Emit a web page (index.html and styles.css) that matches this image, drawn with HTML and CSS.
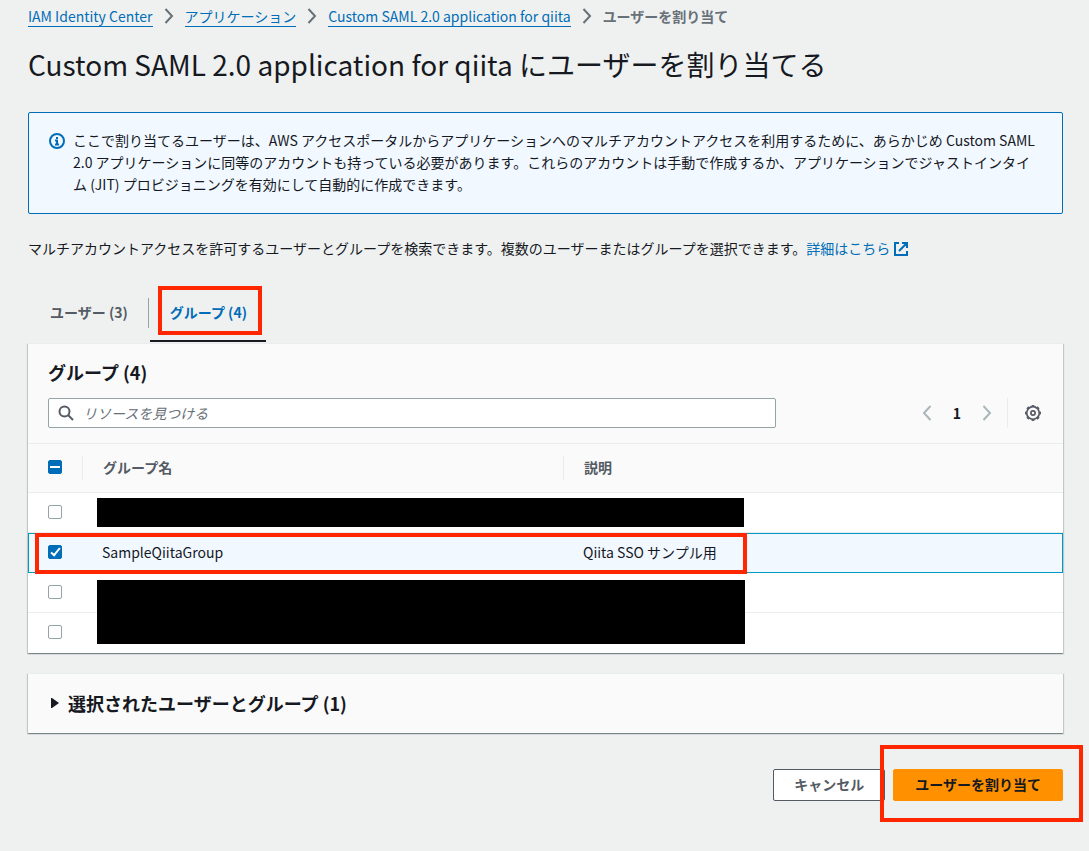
FILE: index.html
```html
<!DOCTYPE html>
<html lang="ja">
<head>
  <meta charset="UTF-8" />
  <meta name="viewport" content="width=device-width, initial-scale=1.0" />
  <title>ユーザーを割り当て</title>
  <link rel="stylesheet" href="styles.css">
</head>
<body>
  <nav class="breadcrumb">
    <a href="#">IAM Identity Center</a>
    <svg class="sep" viewBox="0 0 10 16"><path d="M1.500 1L8 8l-6.500 7"/></svg>
    <a href="#">アプリケーション</a>
    <svg class="sep" viewBox="0 0 10 16"><path d="M1.500 1L8 8l-6.500 7"/></svg>
    <a href="#">Custom SAML 2.0 application for qiita</a>
    <svg class="sep" viewBox="0 0 10 16"><path d="M1.500 1L8 8l-6.500 7"/></svg>
    <span class="current">ユーザーを割り当て</span>
  </nav>

  <main>
    <h1>Custom SAML 2.0 application for qiita にユーザーを割り当てる</h1>

    <div class="alert">
      <svg class="info-icon" viewBox="0 0 16 16">
        <circle cx="8" cy="8" r="7"/>
        <path d="M8 4v2M6 7.500h2V11M6 11.500h4"/>
      </svg>
      <p>ここで割り当てるユーザーは、AWS アクセスポータルからアプリケーションへのマルチアカウントアクセスを利用するために、あらかじめ Custom SAML 2.0 アプリケーションに同等のアカウントも持っている必要があります。これらのアカウントは手動で作成するか、アプリケーションでジャストインタイム (JIT) プロビジョニングを有効にして自動的に作成できます。</p>
    </div>

    <p class="lead">マルチアカウントアクセスを許可するユーザーとグループを検索できます。複数のユーザーまたはグループを選択できます。<a href="#">詳細はこちら <svg class="ext-icon" viewBox="0 0 16 16"><path d="M6 2H2v12h12v-4M9 2h5v5M14 2L6 10"/></svg></a></p>

    <!-- タブ -->
    <div class="tabs" role="tablist">
      <button class="tab" role="tab">ユーザー (3)</button>
      <button class="tab active" role="tab" aria-selected="true">グループ (4)<span class="mark mark-tab"></span></button>
    </div>

    <!-- グループ一覧 -->
    <section class="card">
      <div class="card-header">
        <h2>グループ (4)</h2>
        <div class="toolbar">
          <div class="search">
            <svg class="search-icon" viewBox="0 0 16 16"><circle cx="6.500" cy="6.500" r="5"/><path d="M10 10l5 5"/></svg>
            <input type="text" placeholder="リソースを見つける" aria-label="リソースを見つける">
          </div>
          <div class="pager">
            <button aria-label="前へ"><svg class="arrow" viewBox="0 0 10 16"><path d="M8.500 1L2 8l6.500 7"/></svg></button>
            <button class="page">1</button>
            <button aria-label="次へ"><svg class="arrow" viewBox="0 0 10 16"><path d="M1.500 1L8 8l-6.500 7"/></svg></button>
          </div>
          <button class="settings" aria-label="設定">
            <svg class="gear-icon" viewBox="0 0 16 16">
              <circle cx="8" cy="8" r="6.300"/>
              <circle class="teeth" cx="8" cy="8" r="7.300" pathLength="32"/>
              <circle cx="8" cy="8" r="2.100"/>
            </svg>
          </button>
        </div>
      </div>

      <div class="table-wrap">
        <table>
          <thead>
            <tr>
              <th class="col-check"><input type="checkbox" class="mixed" aria-label="すべて選択"></th>
              <th class="col-name">グループ名</th>
              <th>説明</th>
            </tr>
          </thead>
          <tbody>
            <tr>
              <td><input type="checkbox" aria-label="グループ 1"></td>
              <td></td>
              <td></td>
            </tr>
            <tr class="selected">
              <td><input type="checkbox" aria-label="SampleQiitaGroup" checked></td>
              <td>SampleQiitaGroup</td>
              <td>Qiita SSO サンプル用</td>
            </tr>
            <tr>
              <td><input type="checkbox" aria-label="グループ 3"></td>
              <td></td>
              <td></td>
            </tr>
            <tr>
              <td><input type="checkbox" aria-label="グループ 4"></td>
              <td></td>
              <td></td>
            </tr>
          </tbody>
        </table>
        <span class="mask mask-first"></span>
        <span class="mask mask-last"></span>
        <span class="mark mark-row"></span>
      </div>
    </section>

    <details class="card">
      <summary>
        <svg class="caret" viewBox="0 0 8 10"><path d="M0 0h1l7 5-7 5H0z"/></svg>
        <h2>選択されたユーザーとグループ (1)</h2>
      </summary>
    </details>

    <div class="actions">
      <button class="btn">キャンセル</button>
      <div class="submit">
        <button class="btn primary">ユーザーを割り当て</button>
        <span class="mark mark-submit"></span>
      </div>
    </div>
  </main>
</body>
</html>
```

FILE: styles.css
```css
* {
  box-sizing: border-box;
}

body {
  margin: 0;
  padding: 5px 26px 50px 28px;
  background-color: #eff1f0;
  color: #16191f;
  font-family: "Noto Sans CJK JP", sans-serif;
  font-size: 14px;
  line-height: 22px;
}

h1, h2, p {
  margin: 0;
}

a {
  color: #006db8;
  text-decoration: none;
}

button, input {
  font: inherit;
  color: inherit;
  margin: 0;
}

button {
  border: none;
  padding: 0;
  background: none;
  cursor: pointer;
}

svg {
  fill: none;
  stroke: currentColor;
  stroke-width: 2;
  flex-shrink: 0;
}

/* パンくず */
.breadcrumb {
  display: flex;
  align-items: center;
  gap: 11px;
}

.breadcrumb a {
  line-height: 20px;
  border-bottom: 1px solid #006db8;
}

.sep {
  width: 10px;
  height: 16px;
  color: #687078;
}

.current {
  color: #687078;
  font-weight: bold;
}

h1 {
  margin-top: 19px;
  font-size: 28px;
  line-height: 36px;
  font-weight: 400;
}

.alert {
  display: flex;
  gap: 8px;
  margin-top: 30px;
  padding: 16px 20px 18px;
  border: 1px solid #006db8;
  border-radius: 2px;
  background-color: #f1f8ff;
}

.info-icon {
  width: 16px;
  height: 16px;
  margin-top: 4px;
  color: #006db8;
}

.lead {
  margin-top: 23px;
}

.ext-icon {
  width: 16px;
  height: 16px;
  vertical-align: -3px;
}

/* タブ */
.tabs {
  display: flex;
  margin-top: 27px;
}

.tab {
  position: relative;
  padding: 15px 19px 17px 20px;
  border-bottom: 2px solid transparent;
  color: #545b64;
  font-weight: bold;
}

.tab:first-child {
  padding-left: 22px;
  padding-right: 22px;
}

.tab:first-child::after {
  content: "";
  position: absolute;
  right: 1px;
  top: 12px;
  bottom: 12px;
  border-right: 1px solid #95a5a6;
}

.tab.active {
  color: #006db8;
  border-bottom-color: #16191f;
}

/* カード */
.card {
  margin-top: 1px;
  border-top: 1px solid #eaeded;
  background-color: #fafafa;
  box-shadow: 0 1px 1px rgba(0, 28, 36, 0.3), 1px 1px 1px rgba(0, 28, 36, 0.15), -1px 1px 1px rgba(0, 28, 36, 0.15);
}

.card h2 {
  font-size: 18px;
  line-height: 24px;
}

.card-header {
  padding: 16px 20px 15px;
  border-bottom: 1px solid #eaeded;
}

.toolbar {
  display: flex;
  align-items: center;
  margin-top: 14px;
}

.search {
  position: relative;
  flex: 0 1 728px;
}

.search input {
  display: block;
  width: 100%;
  height: 30px;
  padding: 0 10px 0 34px;
  border: 1px solid #95a5a6;
  border-radius: 2px;
  background-color: #fff;
}

.search input::placeholder {
  color: #687078;
  font-style: italic;
  opacity: 1;
}

.search-icon {
  position: absolute;
  left: 10px;
  top: 7px;
  width: 16px;
  height: 16px;
  color: #545b64;
}

.pager {
  display: flex;
  align-items: center;
  margin-left: auto;
  padding-right: 15px;
}

.page {
  width: 50px;
  font-weight: bold;
}

.arrow {
  display: block;
  width: 10px;
  height: 16px;
  color: #aab7b8;
}

.settings {
  height: 30px;
  padding: 0 2px 0 17px;
  border-left: 1px solid #eaeded;
  color: #545b64;
}

.gear-icon {
  display: block;
  width: 16px;
  height: 16px;
  stroke-width: 1.7;
}

.teeth {
  stroke-width: 1.4;
  stroke-dasharray: 2 2;
  stroke-dashoffset: 1;
}

/* 表 */
.table-wrap {
  position: relative;
}

table {
  width: 100%;
  table-layout: fixed;
  border-spacing: 0;
  background-color: #fff;
}

th, td {
  height: 40px;
  padding: 0 19px 2px;
  border-bottom: 1px solid #eaeded;
  text-align: left;
}

th {
  position: relative;
  height: 49px;
  padding: 0 20px 2px;
  background-color: #fafafa;
  color: #545b64;
}

th:not(:last-child)::after {
  content: "";
  position: absolute;
  right: 0;
  top: 12px;
  height: 24px;
  border-right: 1px solid #eaeded;
}

.col-check {
  width: 55px;
}

.col-name {
  width: 481px;
}

td:first-child {
  padding-left: 20px;
}

tr:last-child td {
  border-bottom-color: transparent;
}

.selected td {
  border-top: 1px solid #0099c3;
  border-bottom-color: #0099c3;
  background-color: #f1f8ff;
}

.selected td:first-child {
  border-left: 1px solid #0099c3;
  padding-left: 19px;
}

.selected td:last-child {
  border-right: 1px solid #0099c3;
}

input[type="checkbox"] {
  appearance: none;
  position: relative;
  display: block;
  width: 14px;
  height: 14px;
  border: 1px solid #95a5a6;
  border-radius: 2px;
  background-color: #fff;
}

input[type="checkbox"]:checked,
input[type="checkbox"].mixed {
  border-color: #006db8;
  background-color: #006db8;
}

input[type="checkbox"]:checked::after {
  content: "";
  position: absolute;
  left: 4px;
  top: 0;
  width: 3px;
  height: 8px;
  border: solid #fff;
  border-width: 0 2px 2px 0;
  transform: rotate(40deg);
}

.mixed::after {
  content: "";
  position: absolute;
  left: 1px;
  top: 5px;
  width: 10px;
  height: 2px;
  background-color: #fff;
}

/* 黒塗り */
.mask {
  position: absolute;
  left: 69px;
  background-color: #000;
}

.mask-first {
  top: 54px;
  width: 647px;
  height: 29px;
}

.mask-last {
  top: 136px;
  width: 648px;
  height: 64px;
}

/* 赤枠 */
.mark {
  position: absolute;
  border: 4px solid #ff2600;
  pointer-events: none;
}

.mark-tab {
  inset: 0 4px 5px 8px;
}

.mark-row {
  left: 7px;
  top: 89px;
  width: 712px;
  height: 41px;
}

.mark-submit {
  inset: -24px -20px -21px -13px;
}

details.card {
  margin-top: 20px;
}

summary {
  display: flex;
  align-items: center;
  gap: 9px;
  padding: 17px 23px 18px;
  list-style: none;
  cursor: pointer;
}

.caret {
  width: 8px;
  height: 10px;
  fill: currentColor;
  stroke: none;
}

.actions {
  display: flex;
  justify-content: flex-end;
  gap: 8px;
  margin-top: 36px;
}

.submit {
  position: relative;
}

.btn {
  height: 32px;
  padding: 0 20px 2px;
  border: 1px solid #545b64;
  border-radius: 2px;
  background-color: #fff;
  color: #545b64;
  font-weight: bold;
}

.primary {
  padding: 0 21px 2px;
  border-color: #ff9100;
  background-color: #ff9100;
  color: #16191f;
}
```
